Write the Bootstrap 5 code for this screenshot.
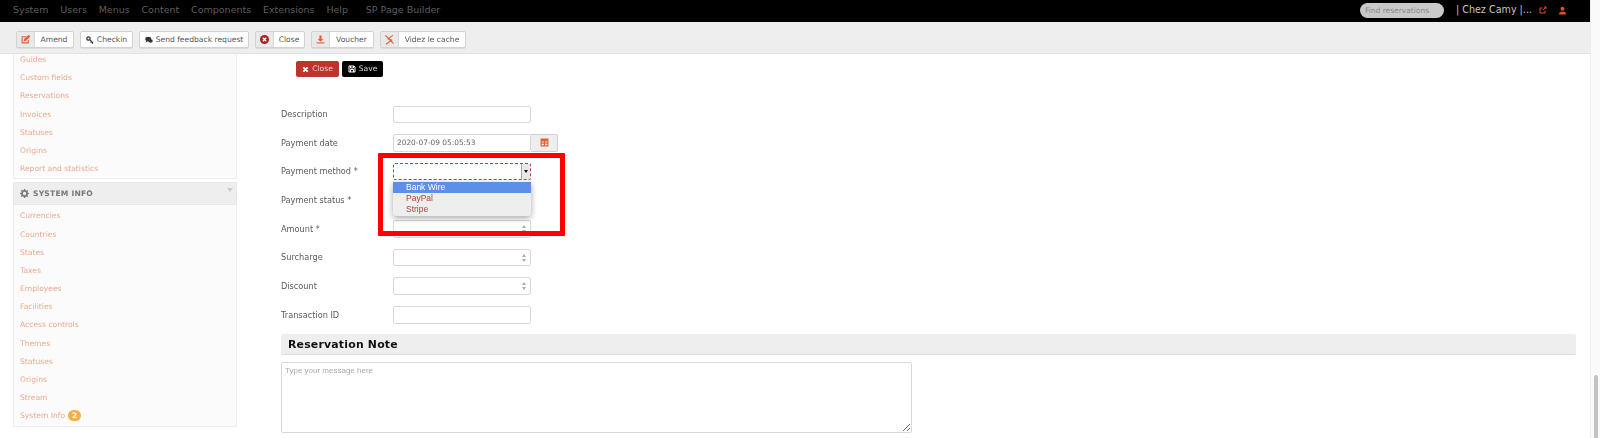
<!DOCTYPE html>
<html lang="en"><head><meta charset="utf-8"><title>Reservation payment</title>
<link href="https://cdn.jsdelivr.net/npm/bootstrap@5.3.0/dist/css/bootstrap.min.css" rel="stylesheet">
<style>
html,body{height:438px;overflow:hidden;background:#fff}
body{font-family:"DejaVu Sans",Verdana,sans-serif;font-size:8px;color:#555}
.shell{width:1600px;height:438px;overflow:hidden;filter:blur(.35px)}
.stage{width:1590px;flex:none;position:relative}
.rail{width:10px;background:#fafafa;border-left:1px solid #eee;padding:375px 2px 0 3px}
.rail-thumb{height:70px;background:#c2c2c2;border-radius:3px}
.topbar{height:22px;background:#000;padding:0 13px 2px;font-size:9.5px;color:#5e5e5e;flex:none}
.topbar span.mi{margin-right:11.8px}
.topbar span.mi-wide{margin-left:6px}
.findbox{width:84px;height:15px;border-radius:8px;background:#c9c9c9;color:#8a8a8a;font-size:7.5px;padding:0 5px;line-height:15px;margin-right:12px}
.userline{color:#c4c4c4;font-size:9.6px;margin-right:7px;white-space:nowrap}
.usericon{margin-left:11px;margin-right:10px}
.toolrow{height:32px;background:#eee;border-bottom:1px solid #e2e2e2;padding:9px 0 0 16px;gap:6px;flex:none}
.tbtn{height:17px;background:#fff;border:1px solid #d2d2d2;border-radius:2px;font-size:7.6px;color:#555;display:flex;align-items:center;white-space:nowrap;box-shadow:0 1px 0 #ddd}
.tcap{flex:none;height:100%;width:18px;background:#e9e9e9;border-right:1px solid #d8d8d8;display:flex;align-items:center;justify-content:center}
.tlab{flex:1;text-align:center}
.w-a{width:58px}.w-b{width:53px}.w-c{width:110px}.w-d{width:50px}.w-e{width:63px}.w-f{width:86px}
.tplain{justify-content:center;gap:3px}
.bodyrow{height:384px;overflow:hidden}
.sidecol{width:224px;margin-left:13px;margin-top:-3px;flex:none}
.sidebox{background:#fbfbfb;border:1px solid #eee;border-top:0}
.sidelink{display:block;height:18.2px;line-height:18.2px;padding-left:6px;color:#e9ab90;font-size:7.6px;text-decoration:none;white-space:nowrap}
.sidehead{height:23px;margin-top:3px;background:#eee;border:1px solid #e8e8e8;color:#777;font-weight:700;font-size:7.6px;letter-spacing:.2px;padding:0 6px;position:relative}
.sidehead i{position:absolute;right:3px;top:5px;width:0;height:0;border-left:3px solid transparent;border-right:3px solid transparent;border-top:4px solid #ccc}
.sidebox2{padding-top:2px;background:#fbfbfb;border:1px solid #eee;border-top:0;height:222px}
.pill{display:inline-block;height:11px;line-height:11px;padding:0 4px;border-radius:6px;background:#f2b04d;color:#fff;font-weight:700;font-size:7.5px;margin-left:3px;vertical-align:0}
.maincol{flex:1;padding-left:44px;min-width:0}
.actions{padding:7px 0 0 15px;gap:3px;height:46px}
.abtn{height:16px;border-radius:2px;color:#fff;font-size:7.6px;display:flex;align-items:center;justify-content:center;gap:3px}
.a-red{width:43px;background:#bd342e;color:#f0c9c6}.a-blk{width:41px;background:#000;color:#d8d8d8}
.frow{height:28.65px;align-items:center;display:flex;color:#5a5a5a;font-size:8.2px}
.flab{width:112px;flex:none}
.fctl{width:138px;height:17.5px;flex:none;border:1px solid #d8d8d8;border-radius:2px;background:#fff;padding:0 3px;font-size:7.4px;color:#666;box-shadow:none;min-height:0;font-family:inherit}
.fctl::-webkit-inner-spin-button{display:none}
.calbtn{width:27px;height:17.5px;background:#eee;border:1px solid #d0d0d0;border-left:0;border-radius:0 2px 2px 0;display:flex;align-items:center;justify-content:center}
.selwrap{position:relative;width:138px;height:17.5px}
.numwrap{position:relative;width:138px;height:17.5px}
.numwrap svg{position:absolute;right:5px;top:5px}
.selbox{height:100%;border:1px dashed #b2423f;border-radius:2px;background:#fff;display:flex;justify-content:flex-end}
.selarrow{width:9px;background:#e8e8e8;border-left:1px solid #aaa;display:flex;align-items:center;justify-content:center}
.selarrow i{width:0;height:0;border-left:2px solid transparent;border-right:2px solid transparent;border-top:3px solid #111}
.dropmenu{position:absolute;left:0;top:19px;width:138px;height:34px;background:#eee;box-shadow:0 2px 6px rgba(0,0,0,.35);border-radius:0 0 3px 3px;font-family:"Liberation Sans",Arial,sans-serif;font-size:8.5px;z-index:3}
.dropmenu div{height:11px;line-height:11px;padding-left:13px;color:#a8433f}
.dropmenu .hit{background:#5b8fe8;color:#fff}
.redmark{position:absolute;left:378px;top:153px;width:187px;height:83px;border:5px solid #f00;border-radius:1px;z-index:4}
.notehead{height:21px;margin:5px 14px 0 0;background:#eee;border-bottom:1px solid #ddd;border-radius:2px;color:#111;font-weight:700;font-size:10.9px;line-height:21px;padding-left:7px;letter-spacing:.2px}
.notearea{display:block;width:631px;height:71px;margin-top:7px;border:1px solid #d8d8d8;border-radius:2px;padding:2px 3px;font-family:"Liberation Sans",Arial,sans-serif;font-size:8px;color:#555;outline:none}
.notearea::placeholder{color:#aaa}
</style></head>
<body>
<div class="shell d-flex">
<div class="stage d-flex flex-column">
  <div class="topbar d-flex align-items-center">
    <span class="mi">System</span><span class="mi">Users</span><span class="mi">Menus</span><span class="mi">Content</span><span class="mi">Components</span><span class="mi">Extensions</span><span class="mi">Help</span><span class="mi mi-wide">SP Page Builder</span>
    <div class="ms-auto d-flex align-items-center">
      <div class="findbox">Find reservations</div>
      <div class="userline">| Chez Camy |...</div>
      <svg width="8" height="8" viewBox="0 0 16 16" fill="none" stroke="#d9502e" stroke-width="2"><path d="M12 9v5H2V4h5"/><path d="M8 8l6-6M10 2h4v4"/></svg>
      <svg class="usericon" width="9" height="9" viewBox="0 0 16 16" fill="#d9502e"><circle cx="8" cy="5" r="3.5"/><path d="M2 15v-2c0-2 2-3 4-3h4c2 0 4 1 4 3v2z"/></svg>
    </div>
  </div>
  <div class="toolrow d-flex">
    <div class="tbtn w-a"><span class="tcap"><svg width="9" height="9" viewBox="0 0 16 16" fill="none" stroke="#e2623a" stroke-width="2"><path d="M13 9v5H2V3h7"/><path d="M6 10l1-3 7-6 1 2-6 6z" fill="#e2623a"/></svg></span><span class="tlab">Amend</span></div>
    <div class="tbtn w-b tplain"><svg width="8" height="8" viewBox="0 0 16 16" fill="none" stroke="#333" stroke-width="2.4"><circle cx="5" cy="5" r="3.4"/><path d="M8 8l6 6M11 11l-2 2M14 14l-2 1"/></svg>Checkin</div>
    <div class="tbtn w-c tplain"><svg width="8" height="8" viewBox="0 0 16 16" fill="#333"><ellipse cx="6.5" cy="6" rx="6" ry="4.5"/><ellipse cx="11" cy="10" rx="4.5" ry="3.5"/><path d="M3 9l-2 4 5-2z"/></svg>Send feedback request</div>
    <div class="tbtn w-d"><span class="tcap"><svg width="9" height="9" viewBox="0 0 16 16"><circle cx="8" cy="8" r="8" fill="#a3211f"/><path d="M5 5l6 6M11 5l-6 6" stroke="#fff" stroke-width="2.4"/></svg></span><span class="tlab">Close</span></div>
    <div class="tbtn w-e"><span class="tcap"><svg width="9" height="9" viewBox="0 0 16 16" fill="#e2623a"><path d="M6 1h4v6h3l-5 5-5-5h3z"/><path d="M1 13h14v2H1z"/></svg></span><span class="tlab">Voucher</span></div>
    <div class="tbtn w-f"><span class="tcap"><svg width="11" height="11" viewBox="0 0 16 16" fill="none" stroke="#e2623a" stroke-width="1.7"><path d="M13 2L6 7l5 2-8 6"/><path d="M2 2l12 12"/></svg></span><span class="tlab">Videz le cache</span></div>
  </div>
  <div class="bodyrow d-flex">
    <div class="sidecol">
      <div class="sidebox">
        <a class="sidelink" href="#">Guides</a><a class="sidelink" href="#">Custom fields</a><a class="sidelink" href="#">Reservations</a><a class="sidelink" href="#">Invoices</a><a class="sidelink" href="#">Statuses</a><a class="sidelink" href="#">Origins</a><a class="sidelink" href="#">Report and statistics</a>
      </div>
      <div class="sidehead d-flex align-items-center gap-1"><svg width="9" height="9" viewBox="0 0 16 16" fill="#777"><path d="M7 0h2l.5 2.2 1.6.7 2-1.2 1.4 1.4-1.2 2 .7 1.6L16 7v2l-2.2.5-.7 1.6 1.2 2-1.4 1.4-2-1.2-1.6.7L9 16H7l-.5-2.2-1.6-.7-2 1.2-1.4-1.4 1.2-2-.7-1.6L0 9V7l2.2-.5.7-1.6-1.2-2 1.4-1.4 2 1.2 1.6-.7zM8 5a3 3 0 100 6 3 3 0 000-6z"/></svg>SYSTEM INFO<i></i></div>
      <div class="sidebox2">
        <a class="sidelink" href="#">Currencies</a><a class="sidelink" href="#">Countries</a><a class="sidelink" href="#">States</a><a class="sidelink" href="#">Taxes</a><a class="sidelink" href="#">Employees</a><a class="sidelink" href="#">Facilities</a><a class="sidelink" href="#">Access controls</a><a class="sidelink" href="#">Themes</a><a class="sidelink" href="#">Statuses</a><a class="sidelink" href="#">Origins</a><a class="sidelink" href="#">Stream</a><a class="sidelink" href="#">System Info<span class="pill">2</span></a>
      </div>
    </div>
    <div class="maincol">
      <div class="actions d-flex">
        <div class="abtn a-red"><svg width="7" height="7" viewBox="0 0 16 16"><path d="M3 3l10 10M13 3L3 13" stroke="#fff" stroke-width="4"/></svg>Close</div>
        <div class="abtn a-blk"><svg width="8" height="8" viewBox="0 0 16 16" fill="none" stroke="#fff" stroke-width="2"><path d="M2 2h10l2 2v10H2z"/><path d="M5 2v4h6V2M5 14V9h6v5"/></svg>Save</div>
      </div>
      <div class="frow"><div class="flab">Description</div><input class="fctl" type="text"></div>
      <div class="frow"><div class="flab">Payment date</div><input class="fctl" type="text" value="2020-07-09 05:05:53"><div class="calbtn"><svg width="9" height="9" viewBox="0 0 16 16" fill="#e2623a"><path d="M1 1h14v14H1zM3 6v7h4V10H3V8h4V6zm6 0v2h4V6zm0 4v3h4v-3z"/></svg></div></div>
      <div class="frow"><div class="flab">Payment method *</div><div class="selwrap"><div class="selbox"><div class="selarrow"><i></i></div></div>
        <div class="dropmenu"><div class="hit">Bank Wire</div><div>PayPal</div><div>Stripe</div></div></div></div>
      <div class="frow"><div class="flab">Payment status *</div></div>
      <div class="frow"><div class="flab">Amount *</div><div class="numwrap"><input class="fctl" type="number"><svg width="4" height="8" viewBox="0 0 4 8" fill="#aaa"><path d="M2 0l2 3H0zM2 8L0 5h4z"/></svg></div></div>
      <div class="frow"><div class="flab">Surcharge</div><div class="numwrap"><input class="fctl" type="number"><svg width="4" height="8" viewBox="0 0 4 8" fill="#aaa"><path d="M2 0l2 3H0zM2 8L0 5h4z"/></svg></div></div>
      <div class="frow"><div class="flab">Discount</div><div class="numwrap"><input class="fctl" type="number"><svg width="4" height="8" viewBox="0 0 4 8" fill="#aaa"><path d="M2 0l2 3H0zM2 8L0 5h4z"/></svg></div></div>
      <div class="frow"><div class="flab">Transaction ID</div><input class="fctl" type="text"></div>
      <div class="notehead">Reservation Note</div>
      <textarea class="notearea" placeholder="Type your message here"></textarea>
    </div>
  </div>
  <div class="redmark"></div>
</div>
<div class="rail"><div class="rail-thumb"></div></div>
</div>
<script src="https://cdn.jsdelivr.net/npm/bootstrap@5.3.0/dist/js/bootstrap.bundle.min.js"></script>
</body></html>
